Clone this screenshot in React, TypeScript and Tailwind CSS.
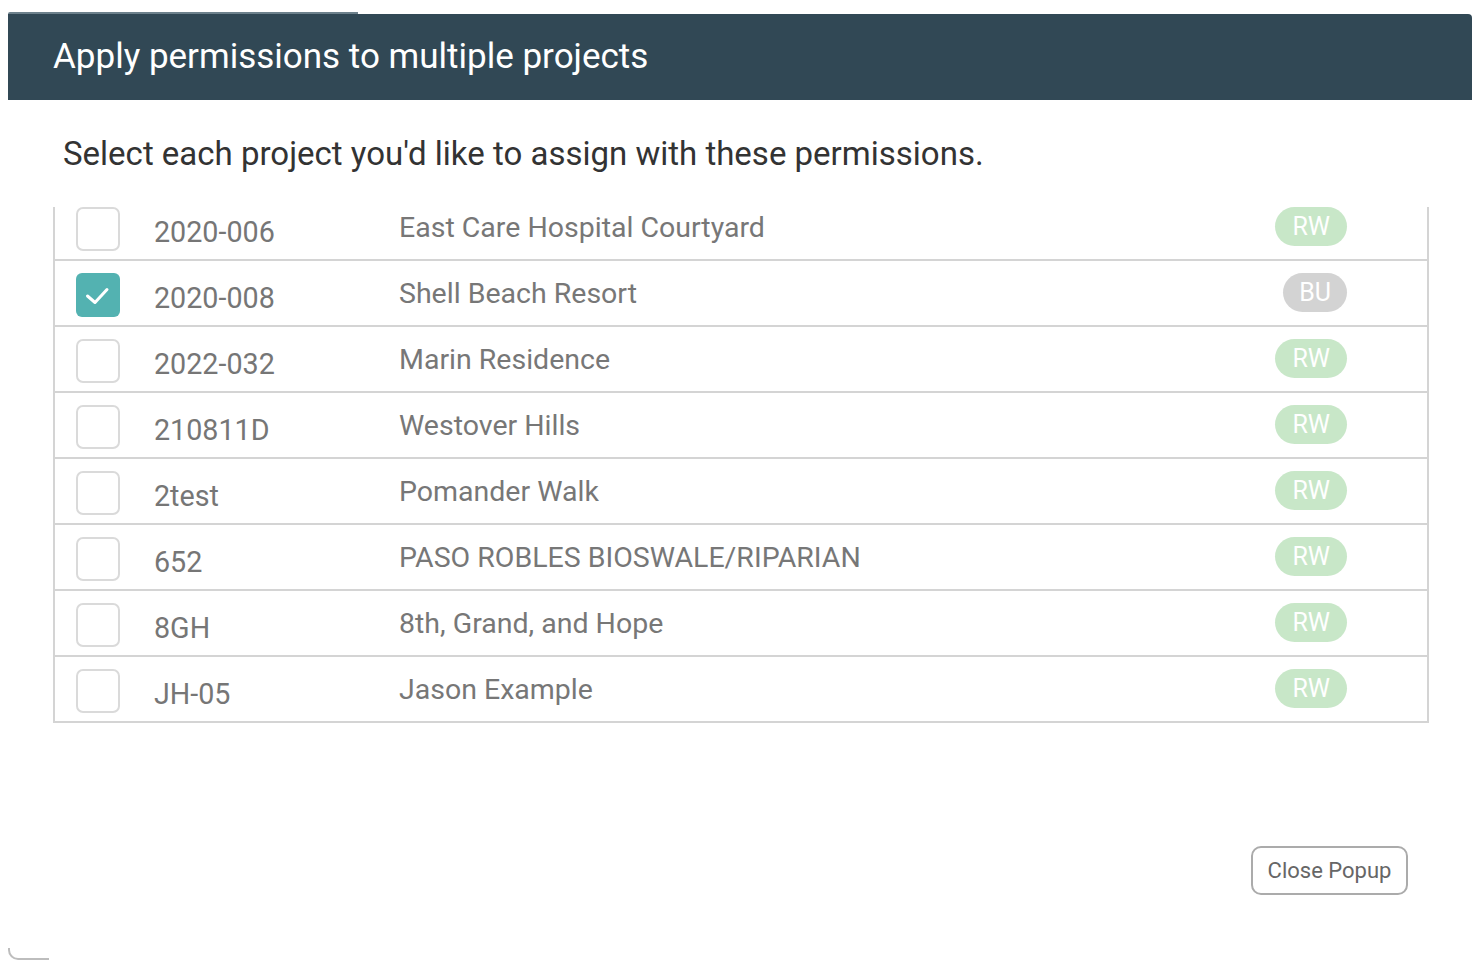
import React from "react";

type Project = {
  code: string;
  name: string;
  role: "RW" | "BU";
  checked?: boolean;
};

const projects: Project[] = [
  { code: "2020-006", name: "East Care Hospital Courtyard", role: "RW" },
  { code: "2020-008", name: "Shell Beach Resort", role: "BU", checked: true },
  { code: "2022-032", name: "Marin Residence", role: "RW" },
  { code: "210811D", name: "Westover Hills", role: "RW" },
  { code: "2test", name: "Pomander Walk", role: "RW" },
  { code: "652", name: "PASO ROBLES BIOSWALE/RIPARIAN", role: "RW" },
  { code: "8GH", name: "8th, Grand, and Hope", role: "RW" },
  { code: "JH-05", name: "Jason Example", role: "RW" },
];

function Checkbox({ checked }: { checked?: boolean }) {
  if (checked) {
    return (
      <div className="w-[44px] h-[44px] rounded-[6px] bg-[#53b2b1] flex-none">
        <svg width="44" height="44" viewBox="0 0 44 44" fill="none">
          <polyline
            points="11.5,23 19,29.5 31,16.5"
            stroke="white"
            strokeWidth="3"
            strokeLinecap="round"
            strokeLinejoin="round"
          />
        </svg>
      </div>
    );
  }
  return <div className="w-[44px] h-[44px] rounded-[7px] border-2 border-[#dadada] bg-white flex-none" />;
}

function Row({ p }: { p: Project }) {
  return (
    <div className="h-[66px] flex items-start border-b-2 border-[#d4d4d4]">
      <div className="ml-[21px] mt-[12px]">
        <Checkbox checked={p.checked} />
      </div>
      <div className="ml-[34px] w-[245px] pt-[23px] text-[28.7px] leading-[28px] text-[#767676]">
        {p.code}
      </div>
      <div className="flex-1 pt-[19px] text-[28.5px] leading-[28px] text-[#777777]">{p.name}</div>
      <div className="mt-[12px] mr-[80px]">
        <span
          className={
            p.role === "RW"
              ? "inline-block h-[39px] px-[17px] rounded-full bg-[#c8e7c8] text-white text-[25px] leading-[39px]"
              : "inline-block h-[39px] px-[16px] rounded-full bg-[#d3d3d3] text-white text-[25px] leading-[39px]"
          }
        >
          {p.role}
        </span>
      </div>
    </div>
  );
}

export default function App() {
  return (
    <div className="min-h-[970px] bg-white" style={{ fontFamily: "Roboto, 'Noto Sans', sans-serif" }}>
      <div className="pt-[12px] pl-[8px] pr-[4px]">
        <div className="h-[2px] w-[350px] bg-[#6d818c] rounded-tl-[8px]" />
        <div className="h-[86px] bg-[#314855] rounded-tr-[4px] pl-[45px] pt-[25px]">
          <h1 className="text-white text-[35px] leading-[35px]">Apply permissions to multiple projects</h1>
        </div>

        <p className="mt-[37px] ml-[55px] text-[33px] leading-[33px] text-[#333333]">
          Select each project you'd like to assign with these permissions.
        </p>

        <div className="mt-[37px] ml-[45px] mr-[43px] h-[516px] overflow-hidden border-l-2 border-r-2 border-[#d4d4d4]">
          <div className="-mt-[12px]">
            {projects.map((p) => (
              <Row key={p.code} p={p} />
            ))}
          </div>
        </div>

        <div className="flex justify-end mt-[123px] mr-[64px]">
          <button className="h-[49px] w-[157px] rounded-[10px] border-2 border-[#ababab] bg-white text-[22px] text-[#666666]">
            Close Popup
          </button>
        </div>

        <div className="mt-[53px] w-[41px] h-[12px] border-l-2 border-b-2 border-[#bdbdbd] rounded-bl-[10px]" />
      </div>
    </div>
  );
}
